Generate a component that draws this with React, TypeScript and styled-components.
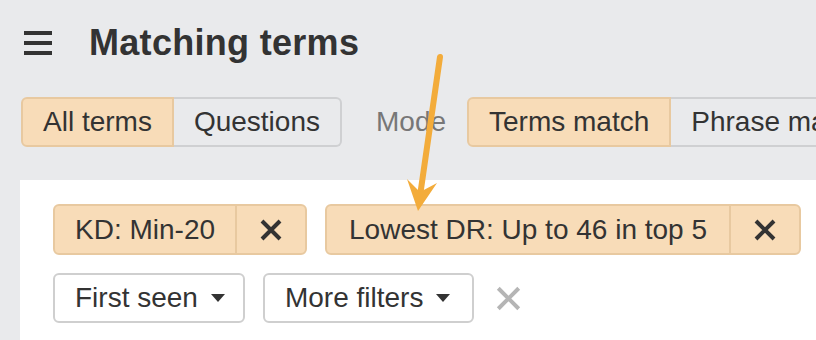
import React from "react";
import styled, { createGlobalStyle } from "styled-components";

const GlobalStyle = createGlobalStyle`
  html, body {
    margin: 0;
    padding: 0;
    background: #e9eaec;
    font-family: "Liberation Sans", Arial, sans-serif;
    color: #333;
  }
  * { box-sizing: border-box; }
`;

const Page = styled.div`
  position: relative;
  width: 816px;
  height: 340px;
  overflow: hidden;
`;

const Header = styled.header`
  display: flex;
  align-items: center;
  gap: 37px;
  padding: 19px 0 0 24px;
  height: 67px;
`;

const Burger = styled.div`
  display: flex;
  flex-direction: column;
  justify-content: space-between;
  width: 28px;
  height: 24px;
  span {
    display: block;
    height: 4px;
    background: #333;
  }
`;

const Title = styled.h1`
  margin: 0;
  font-size: 36px;
  line-height: 48px;
  font-weight: 700;
  color: #333;
  letter-spacing: 0.3px;
`;

const Toolbar = styled.div`
  display: flex;
  align-items: center;
  margin: 30px 0 0 21px;
  white-space: nowrap;
`;

const Segmented = styled.div`
  display: flex;
  flex-shrink: 0;
`;

const Segment = styled.div<{ $active?: boolean; $first?: boolean; $last?: boolean }>`
  height: 50px;
  padding: 0 20px;
  display: flex;
  align-items: center;
  font-size: 28px;
  color: #333;
  background: ${(p) => (p.$active ? "#f8dcb8" : "#e9eaec")};
  border: 2px solid ${(p) => (p.$active ? "#e8c9a0" : "#cfd0d2")};
  border-left-width: ${(p) => (p.$first ? "2px" : "0")};
  border-radius: ${(p) =>
    p.$first ? "6px 0 0 6px" : p.$last ? "0 6px 6px 0" : "0"};
`;

const ModeLabel = styled.span`
  font-size: 28px;
  color: #777;
  margin: 0 21px 0 34px;
`;

const Panel = styled.section`
  margin: 33px 0 0 20px;
  min-height: 200px;
  background: #fff;
  padding: 24px 0 0 33px;
`;

const Row = styled.div<{ $gap: number }>`
  display: flex;
  align-items: center;
  gap: ${(p) => p.$gap}px;
  margin-bottom: 18px;
`;

const Chip = styled.div`
  display: flex;
  height: 51px;
  background: #f8dcb8;
  border: 2px solid #e8c9a0;
  border-radius: 6px;
  font-size: 28px;
  color: #333;
`;

const ChipLabel = styled.span<{ $pad: number }>`
  display: flex;
  align-items: center;
  padding: 0 ${(p) => p.$pad}px;
`;

const ChipClose = styled.span`
  display: flex;
  align-items: center;
  justify-content: center;
  width: 70px;
  border-left: 2px solid #e8c9a0;
`;

const Dropdown = styled.div<{ $padRight: number }>`
  display: flex;
  align-items: center;
  gap: 13px;
  height: 50px;
  padding: 0 ${(p) => p.$padRight}px 0 20px;
  background: #fff;
  border: 2px solid #cfcfcf;
  border-radius: 6px;
  font-size: 28px;
  color: #333;
`;

const Caret = styled.span`
  width: 0;
  height: 0;
  border-left: 7px solid transparent;
  border-right: 7px solid transparent;
  border-top: 8px solid #333;
`;

const ClearAll = styled.span`
  display: flex;
  margin-left: 4px;
`;

const Overlay = styled.svg`
  position: absolute;
  left: 0;
  top: 0;
  pointer-events: none;
`;

const Cross: React.FC<{ size: number; stroke: number; color: string }> = ({
  size,
  stroke,
  color,
}) => (
  <svg width={size} height={size} viewBox="0 0 22 22">
    <path
      d="M2 2 L20 20 M20 2 L2 20"
      stroke={color}
      strokeWidth={stroke}
      strokeLinecap="butt"
    />
  </svg>
);

const filters = [
  { label: "KD: Min-20", pad: 20 },
  { label: "Lowest DR: Up to 46 in top 5", pad: 22 },
];

export default function App() {
  return (
    <Page>
      <GlobalStyle />
      <Header>
        <Burger>
          <span />
          <span />
          <span />
        </Burger>
        <Title>Matching terms</Title>
      </Header>

      <Toolbar>
        <Segmented>
          <Segment $active $first>
            All terms
          </Segment>
          <Segment $last>Questions</Segment>
        </Segmented>
        <ModeLabel>Mode</ModeLabel>
        <Segmented>
          <Segment $active $first>
            Terms match
          </Segment>
          <Segment>Phrase match</Segment>
        </Segmented>
      </Toolbar>

      <Panel>
        <Row $gap={18}>
          {filters.map((f) => (
            <Chip key={f.label}>
              <ChipLabel $pad={f.pad}>{f.label}</ChipLabel>
              <ChipClose>
                <Cross size={22} stroke={4} color="#333" />
              </ChipClose>
            </Chip>
          ))}
        </Row>
        <Row $gap={18}>
          <Dropdown $padRight={18}>
            First seen <Caret />
          </Dropdown>
          <Dropdown $padRight={22}>
            More filters <Caret />
          </Dropdown>
          <ClearAll>
            <Cross size={25} stroke={3.5} color="#b5b5b5" />
          </ClearAll>
        </Row>
      </Panel>

      <Overlay width="816" height="340" viewBox="0 0 816 340">
        <line
          x1="440"
          y1="57"
          x2="420"
          y2="196"
          stroke="#f3ac3b"
          strokeWidth="6"
          strokeLinecap="round"
        />
        <polygon points="407,179 420,192 437,183 418,211" fill="#f3ac3b" />
      </Overlay>
    </Page>
  );
}
